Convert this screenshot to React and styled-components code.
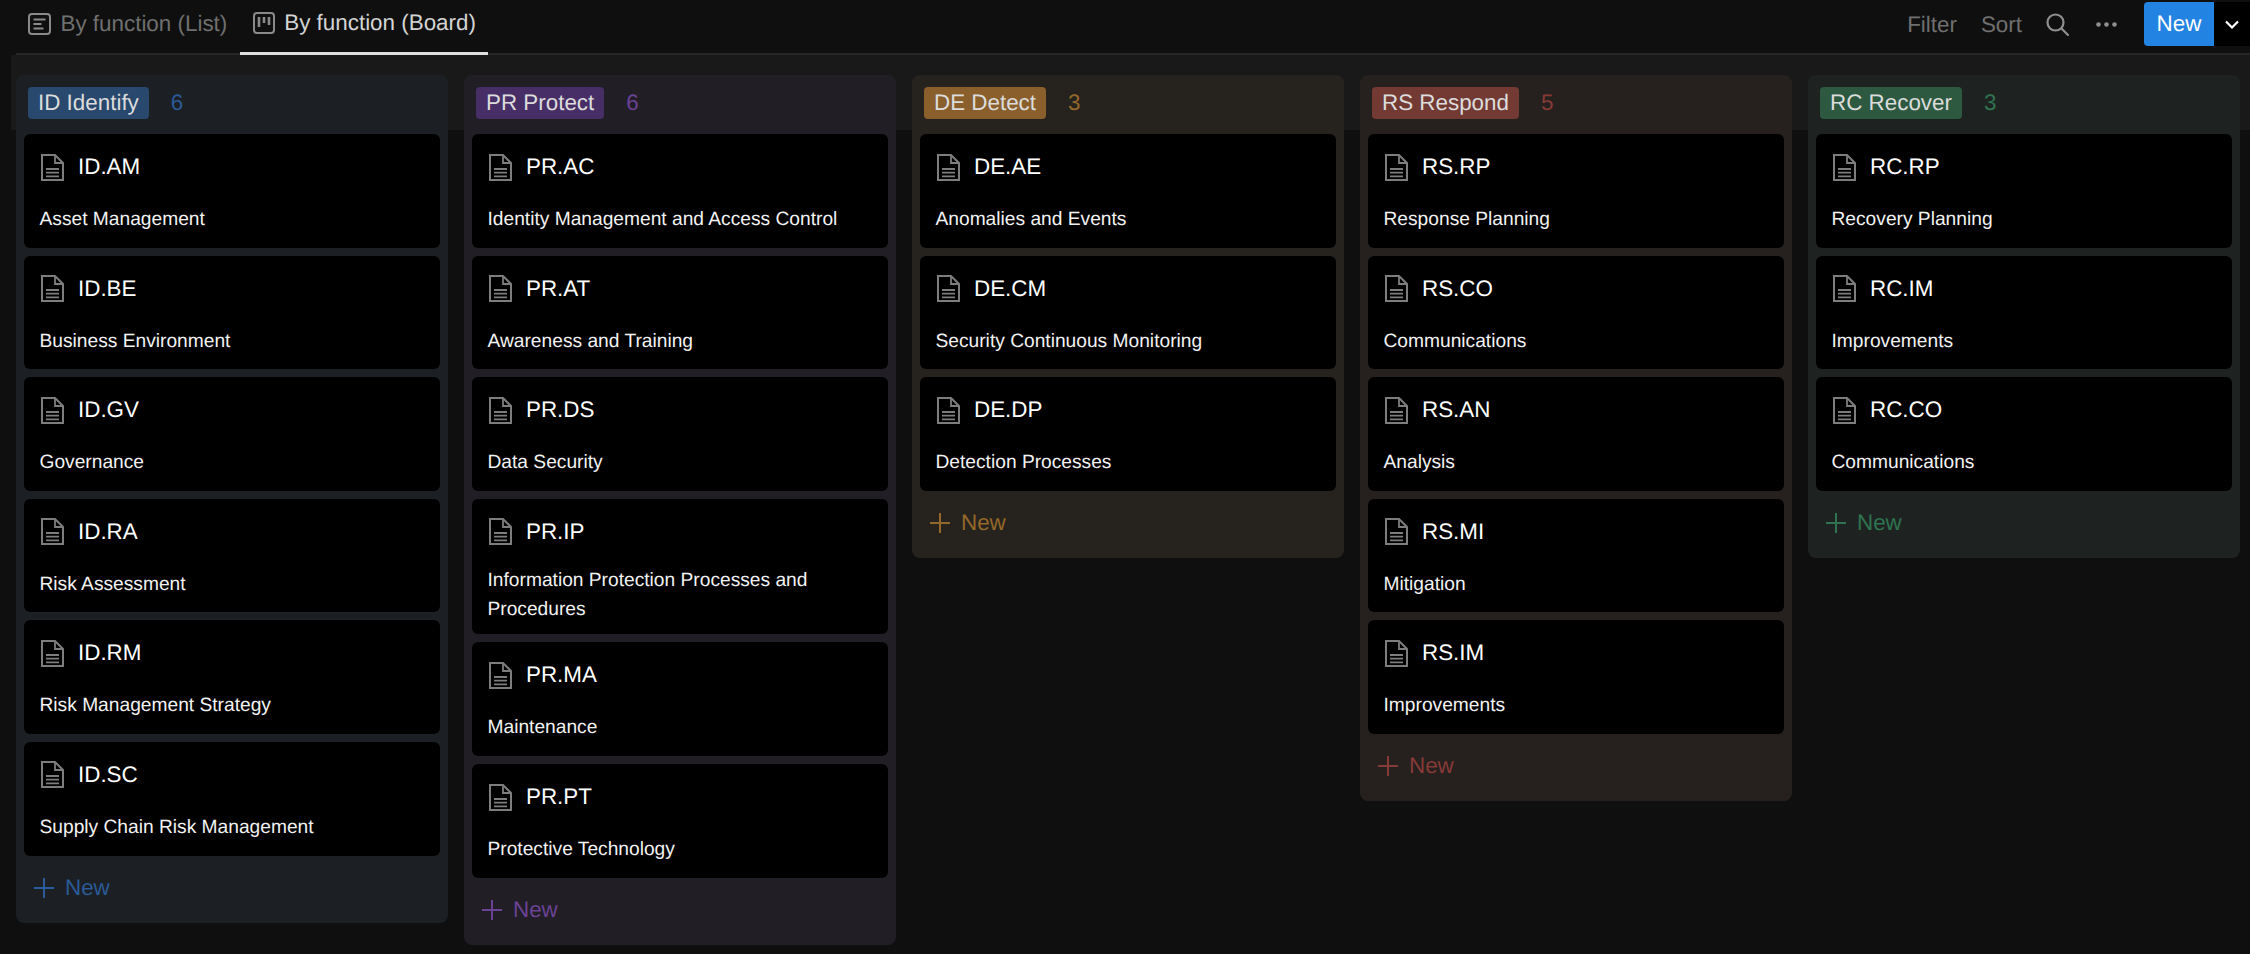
import styled, { createGlobalStyle } from "styled-components";

const GlobalStyle = createGlobalStyle`
  html, body {
    margin: 0;
    height: 100%;
    overflow: hidden;
    background: #0f0f0f;
    font-family: "Liberation Sans", Arial, sans-serif;
    text-rendering: geometricPrecision;
  }
`;

const groups = [
  {
    code: "ID Identify",
    chip: "#28486e",
    accent: "#2a5a97",
    bg: "#1c2024",
    items: [
      ["ID.AM", "Asset Management"],
      ["ID.BE", "Business Environment"],
      ["ID.GV", "Governance"],
      ["ID.RA", "Risk Assessment"],
      ["ID.RM", "Risk Management Strategy"],
      ["ID.SC", "Supply Chain Risk Management"],
    ],
  },
  {
    code: "PR Protect",
    chip: "#482e66",
    accent: "#6b4296",
    bg: "#211e26",
    items: [
      ["PR.AC", "Identity Management and Access Control"],
      ["PR.AT", "Awareness and Training"],
      ["PR.DS", "Data Security"],
      ["PR.IP", "Information Protection Processes and Procedures"],
      ["PR.MA", "Maintenance"],
      ["PR.PT", "Protective Technology"],
    ],
  },
  {
    code: "DE Detect",
    chip: "#8a5f2c",
    accent: "#94682a",
    bg: "#26221d",
    items: [
      ["DE.AE", "Anomalies and Events"],
      ["DE.CM", "Security Continuous Monitoring"],
      ["DE.DP", "Detection Processes"],
    ],
  },
  {
    code: "RS Respond",
    chip: "#733a34",
    accent: "#863a36",
    bg: "#26211e",
    items: [
      ["RS.RP", "Response Planning"],
      ["RS.CO", "Communications"],
      ["RS.AN", "Analysis"],
      ["RS.MI", "Mitigation"],
      ["RS.IM", "Improvements"],
    ],
  },
  {
    code: "RC Recover",
    chip: "#2c593f",
    accent: "#2f7350",
    bg: "#1e2321",
    items: [
      ["RC.RP", "Recovery Planning"],
      ["RC.IM", "Improvements"],
      ["RC.CO", "Communications"],
    ],
  },
];

function ListIcon() {
  return (
    <svg width="23" height="22" viewBox="0 0 23 22" fill="none" stroke="#8a8a8a" strokeWidth="2">
      <rect x="1" y="1" width="21" height="20" rx="3" />
      <path d="M5.5 6.5h12M5.5 11h8M5.5 15.5h10" />
    </svg>
  );
}

function BoardIcon() {
  return (
    <svg width="22" height="22" viewBox="0 0 22 22" fill="none" stroke="#8a8a8a" strokeWidth="2">
      <rect x="1" y="1" width="20" height="20" rx="3" />
      <path d="M6 5v10M11 5v6M16 5v8" strokeWidth="2.6" />
    </svg>
  );
}

function SearchIcon() {
  return (
    <svg width="23" height="23" viewBox="0 0 23 23" fill="none" stroke="#8f8f8f" strokeWidth="2.2">
      <circle cx="9.5" cy="9.5" r="8" />
      <path d="M15.5 15.5l6.5 6.5" strokeLinecap="round" />
    </svg>
  );
}

function DotsIcon() {
  return (
    <svg width="21" height="5" viewBox="0 0 21 5" fill="#8f8f8f">
      <circle cx="2.5" cy="2.5" r="2.3" />
      <circle cx="10.5" cy="2.5" r="2.3" />
      <circle cx="18.5" cy="2.5" r="2.3" />
    </svg>
  );
}

function ChevronIcon() {
  return (
    <svg width="14" height="9" viewBox="0 0 14 9" fill="none" stroke="#ffffff" strokeWidth="2.2">
      <path d="M1 1.5l6 6 6-6" />
    </svg>
  );
}

function DocIcon() {
  return (
    <svg width="23" height="27" viewBox="0 0 23 27" fill="none" stroke="#7d7d7d" strokeWidth="2">
      <path d="M1 1h13l8 8v17H1z" />
      <path d="M14 1v8h8" strokeWidth="1.8" />
      <path d="M5 15h13M5 18.7h13M5 22.4h13" strokeWidth="1.8" />
    </svg>
  );
}

function PlusIcon({ color }) {
  return (
    <svg width="20" height="20" viewBox="0 0 20 20" fill="none" stroke={color} strokeWidth="2">
      <path d="M10 0v20M0 10h20" />
    </svg>
  );
}

function Card({ title, text }) {
  return (
    <CardBox>
      <CardTitle>
        <DocIcon />
        <span>{title}</span>
      </CardTitle>
      <CardText>{text}</CardText>
    </CardBox>
  );
}

function Column({ group }) {
  return (
    <ColumnBox $bg={group.bg}>
      <ColumnHead>
        <Chip $bg={group.chip}>{group.code}</Chip>
        <Count $color={group.accent}>{group.items.length}</Count>
      </ColumnHead>
      <CardList>
        {group.items.map(([title, text]) => (
          <Card key={title} title={title} text={text} />
        ))}
      </CardList>
      <AddRow $color={group.accent}>
        <PlusIcon color={group.accent} />
        <span>New</span>
      </AddRow>
    </ColumnBox>
  );
}

export default function App() {
  return (
    <Page>
      <GlobalStyle />
      <TopBar>
        <Tabs>
          <Tab>
            <ListIcon />
            By function (List)
          </Tab>
          <Tab $active>
            <BoardIcon />
            By function (Board)
          </Tab>
        </Tabs>
        <Actions>
          <ActionText>Filter</ActionText>
          <ActionText>Sort</ActionText>
          <IconSlot>
            <SearchIcon />
          </IconSlot>
          <IconSlot>
            <DotsIcon />
          </IconSlot>
          <NewGroup>
            <NewButton>New</NewButton>
            <NewCaret>
              <ChevronIcon />
            </NewCaret>
          </NewGroup>
        </Actions>
      </TopBar>
      <Board>
        {groups.map((g) => (
          <Column key={g.code} group={g} />
        ))}
      </Board>
    </Page>
  );
}

const Page = styled.div`
  width: 2250px;
  height: 954px;
  overflow: hidden;
  background: #0f0f0f;
`;

const TopBar = styled.div`
  height: 55px;
  margin-left: 16px;
  box-sizing: border-box;
  border-bottom: 2px solid #262626;
  display: flex;
  justify-content: space-between;
`;

const Tabs = styled.div`
  display: flex;
  height: 55px;
  margin-left: -1px;
`;

const Tab = styled.div`
  display: flex;
  align-items: center;
  gap: 9.5px;
  padding: 0 12.5px 7px 13px;
  box-sizing: border-box;
  height: 55px;
  font-size: 22.4px;
  color: ${(p) => (p.$active ? "#d4d4d4" : "#6f6f6f")};
  border-bottom: ${(p) => (p.$active ? "3px solid #e0e0e0" : "0")};
`;

const Actions = styled.div`
  display: flex;
  align-items: center;
  height: 53px;
`;

const ActionText = styled.div`
  font-size: 22.4px;
  color: #6f6f6f;
  margin-right: 24px;
  padding-bottom: 4px;
`;

const IconSlot = styled.div`
  display: flex;
  align-items: center;
  margin-right: 27px;
  padding-bottom: 4px;
`;

const NewGroup = styled.div`
  display: flex;
  height: 44px;
  margin-bottom: 5px;
`;

const NewButton = styled.div`
  width: 70px;
  display: flex;
  align-items: center;
  justify-content: center;
  background: #2383e2;
  color: #fff;
  font-size: 22.4px;
  border-radius: 4px 0 0 4px;
`;

const NewCaret = styled.div`
  width: 36px;
  display: flex;
  align-items: center;
  justify-content: center;
  background: #000;
`;

const Board = styled.div`
  margin-left: 11px;
  padding: 20px 10px 0 5px;
  display: flex;
  align-items: flex-start;
  gap: 16px;
  background: linear-gradient(#191919 75px, transparent 75px);
`;

const ColumnBox = styled.div`
  width: 432px;
  box-sizing: border-box;
  background: ${(p) => p.$bg};
  border-radius: 8px;
  padding: 12px 8px 0;
`;

const ColumnHead = styled.div`
  display: flex;
  align-items: center;
  gap: 22px;
  height: 32px;
  padding-left: 4px;
  margin-bottom: 15px;
`;

const Chip = styled.div`
  height: 32px;
  display: flex;
  align-items: center;
  padding: 0 10px;
  background: ${(p) => p.$bg};
  color: #dcdcdc;
  font-size: 22.4px;
  border-radius: 4px;
`;

const Count = styled.div`
  color: ${(p) => p.$color};
  font-size: 22.4px;
`;

const CardList = styled.div`
  display: flex;
  flex-direction: column;
  gap: 8px;
`;

const CardBox = styled.div`
  background: #000;
  border-radius: 6px;
  padding: 17px 16px 9.5px 15.5px;
  box-sizing: border-box;
`;

const CardTitle = styled.div`
  display: flex;
  align-items: center;
  gap: 14px;
  height: 32px;
  padding-left: 1.5px;
  color: #fff;
  font-size: 22.4px;
  margin-bottom: 19.6px;
`;

const CardText = styled.div`
  display: flex;
  align-items: center;
  min-height: 35.5px;
  color: #f2f2f2;
  font-size: 19.2px;
  line-height: 28.8px;
`;

const AddRow = styled.div`
  display: flex;
  align-items: center;
  gap: 11px;
  height: 64px;
  padding: 0 0 3px 10px;
  color: ${(p) => p.$color};
  font-size: 22.4px;
`;
